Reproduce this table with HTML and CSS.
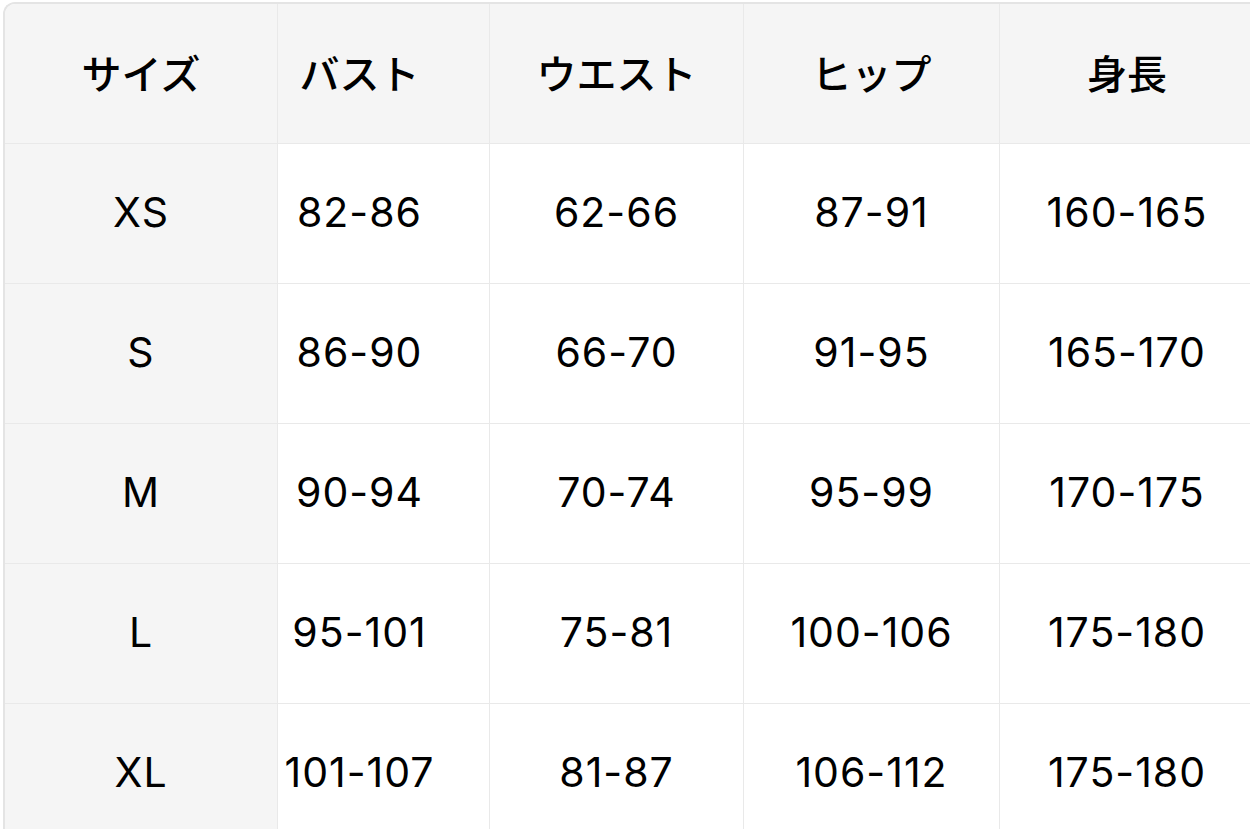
FILE: index.html
```html
<!DOCTYPE html>
<html lang="ja">
<head>
<meta charset="utf-8">
<title>サイズ表</title>
<link rel="stylesheet" href="styles.css">
</head>
<body>
<div class="chart">
  <div class="cell head c1">サイズ</div>
  <div class="cell head c2">バスト</div>
  <div class="cell head c3">ウエスト</div>
  <div class="cell head c4">ヒップ</div>
  <div class="cell head c5">身長</div>

  <div class="cell size c1">XS</div>
  <div class="cell c2">82-86</div>
  <div class="cell c3">62-66</div>
  <div class="cell c4">87-91</div>
  <div class="cell c5">160-165</div>

  <div class="cell size c1">S</div>
  <div class="cell c2">86-90</div>
  <div class="cell c3">66-70</div>
  <div class="cell c4">91-95</div>
  <div class="cell c5">165-170</div>

  <div class="cell size c1">M</div>
  <div class="cell c2">90-94</div>
  <div class="cell c3">70-74</div>
  <div class="cell c4">95-99</div>
  <div class="cell c5">170-175</div>

  <div class="cell size c1">L</div>
  <div class="cell c2">95-101</div>
  <div class="cell c3">75-81</div>
  <div class="cell c4">100-106</div>
  <div class="cell c5">175-180</div>

  <div class="cell size c1">XL</div>
  <div class="cell c2">101-107</div>
  <div class="cell c3">81-87</div>
  <div class="cell c4">106-112</div>
  <div class="cell c5">175-180</div>
</div>
</body>
</html>
```

FILE: styles.css
```css
html, body {
  margin: 0;
  padding: 0;
  background: #ffffff;
  overflow: hidden;
}

body {
  font-family: "Inter", "Noto Sans CJK JP", sans-serif;
  color: #000000;
}

.chart {
  margin: 2px 0 0 3px;
  width: 1247px;
  box-sizing: border-box;
  border-top: 2px solid #e4e4e4;
  border-left: 2px solid #e4e4e4;
  border-top-left-radius: 12px;
  overflow: hidden;
  display: grid;
  grid-template-columns: 273px 212px 254px 256px 250px;
  grid-auto-rows: 140px;
}

.cell {
  box-sizing: border-box;
  border-right: 1px solid #e9e9e9;
  border-bottom: 1px solid #e9e9e9;
  display: flex;
  align-items: center;
  justify-content: center;
  padding-bottom: 3px;
  font-size: 41px;
  font-weight: 400;
  letter-spacing: 1px;
  background: #ffffff;
}

.head {
  background: #f5f5f5;
  font-family: "Noto Sans CJK JP", sans-serif;
  font-size: 40px;
  font-weight: 500;
  letter-spacing: 0;
}

.size {
  background: #f5f5f5;
}

.c2 {
  padding-right: 48px;
}

.c5 {
  padding-left: 4px;
  border-right: none;
}
```
